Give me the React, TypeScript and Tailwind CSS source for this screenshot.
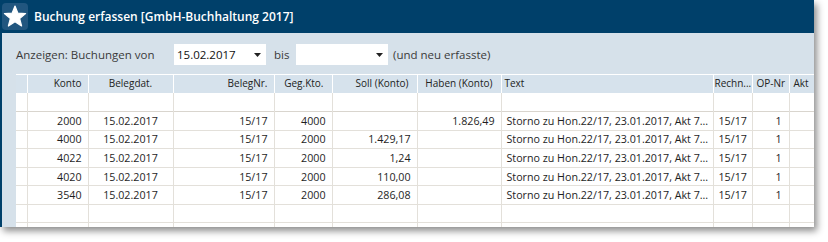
import React from "react";

type Row = { konto: string; datum: string; beleg: string; geg: string; soll: string; haben: string; text: string; rechn: string; op: string };

const rows: Row[] = [
  { konto: "2000", datum: "15.02.2017", beleg: "15/17", geg: "4000", soll: "", haben: "1.826,49", text: "Storno zu Hon.22/17, 23.01.2017, Akt 7...", rechn: "15/17", op: "1" },
  { konto: "4000", datum: "15.02.2017", beleg: "15/17", geg: "2000", soll: "1.429,17", haben: "", text: "Storno zu Hon.22/17, 23.01.2017, Akt 7...", rechn: "15/17", op: "1" },
  { konto: "4022", datum: "15.02.2017", beleg: "15/17", geg: "2000", soll: "1,24", haben: "", text: "Storno zu Hon.22/17, 23.01.2017, Akt 7...", rechn: "15/17", op: "1" },
  { konto: "4020", datum: "15.02.2017", beleg: "15/17", geg: "2000", soll: "110,00", haben: "", text: "Storno zu Hon.22/17, 23.01.2017, Akt 7...", rechn: "15/17", op: "1" },
  { konto: "3540", datum: "15.02.2017", beleg: "15/17", geg: "2000", soll: "286,08", haben: "", text: "Storno zu Hon.22/17, 23.01.2017, Akt 7...", rechn: "15/17", op: "1" },
];

const widths = [11, 61, 85, 101, 58, 85, 84, 212, 39, 37, 25];

function Star() {
  return (
    <div className="w-[26px] h-[27px] rounded-[4px] bg-[#21567f] flex items-center justify-center">
      <svg width="24" height="23" viewBox="0 0 24 23">
        <path d="M12 1 L14.9 8.2 L22.6 8.6 L16.6 13.5 L18.6 21 L12 16.8 L5.4 21 L7.4 13.5 L1.4 8.6 L9.1 8.2 Z" fill="#fff" strokeLinejoin="round" stroke="#fff" strokeWidth="1.2" />
      </svg>
    </div>
  );
}

function DateBox({ value }: { value: string }) {
  return (
    <div className="w-[92px] h-[21px] bg-white flex items-center pl-[3px] pr-[5px]">
      <span className="flex-1 text-[11.5px] text-[#111] leading-none">{value}</span>
      <svg width="7" height="4" viewBox="0 0 7 4"><path d="M0 0 L7 0 L3.5 4 Z" fill="#222" /></svg>
    </div>
  );
}

export default function App() {
  const cell = "border-r border-[#e3e0da] px-[6px] whitespace-nowrap overflow-hidden";
  return (
    <div className="w-[828px] h-[242px] bg-white" style={{ fontFamily: '"Open Sans", "Noto Sans", sans-serif' }}>
      <div className="w-[814px] shadow-[3px_4px_7px_rgba(0,0,0,0.45)]">
        <div className="h-[33px] bg-[#00406a] flex items-center pl-[2px] gap-[6px]">
          <Star />
          <span className="text-white font-semibold text-[12px]">Buchung erfassen [GmbH-Buchhaltung 2017]</span>
        </div>
        <div className="h-[194px] bg-[#d6e1ea] border-l-2 border-[#00406a] pl-[14px] overflow-hidden">
          <div className="h-[41px] flex items-center pt-[2px] text-[11.5px] text-[#3a3a3a]">
            <span className="w-[158px]">Anzeigen: Buchungen von</span>
            <DateBox value="15.02.2017" />
            <span className="w-[30px] pl-[8px]">bis</span>
            <DateBox value="" />
            <span className="pl-[5px]">(und neu erfasste)</span>
          </div>
          <table className="table-fixed border-collapse bg-white border-t border-white text-[#1e1e1e]" style={{ width: 798 }}>
            <colgroup>
              {widths.map((w, i) => (
                <col key={i} style={{ width: w }} />
              ))}
            </colgroup>
            <thead>
              <tr className="h-[18px] bg-[#d6e2ec] text-[10px] text-[#222]">
                <th className="border-r border-white"></th>
                <th className="border-r border-white font-normal text-right pr-[6px]">Konto</th>
                <th className="border-r border-white font-normal text-center">Belegdat.</th>
                <th className="border-r border-white font-normal text-right pr-[6px]">BelegNr.</th>
                <th className="border-r border-white font-normal text-right pr-[8px]">Geg.Kto.</th>
                <th className="border-r border-white font-normal text-right pr-[8px]">Soll (Konto)</th>
                <th className="border-r border-white font-normal text-right pr-[8px]">Haben (Konto)</th>
                <th className="border-r border-white font-normal text-left pl-[3px]">Text</th>
                <th className="border-r border-white font-normal text-left pl-[1px] whitespace-nowrap overflow-hidden">Rechn...</th>
                <th className="border-r border-white font-normal text-left pl-[4px] whitespace-nowrap">OP-Nr</th>
                <th className="font-normal text-left pl-[4px]">Akt</th>
              </tr>
            </thead>
            <tbody className="text-[10.7px]">
              <tr className="h-[19px] border-b border-[#d9d5ce]">
                {widths.map((_, i) => (
                  <td key={i} className="border-r border-[#e3e0da]"></td>
                ))}
              </tr>
              {rows.map((r, i) => (
                <tr key={i} className="h-[18.6px] border-b border-[#e3e0da]">
                  <td className="border-r border-[#e3e0da]"></td>
                  <td className={`${cell} text-right`}>{r.konto}</td>
                  <td className={`${cell} text-center`}>{r.datum}</td>
                  <td className={`${cell} text-right`}>{r.beleg}</td>
                  <td className={`${cell} text-right`}>{r.geg}</td>
                  <td className={`${cell} text-right`}>{r.soll}</td>
                  <td className={`${cell} text-right`}>{r.haben}</td>
                  <td className={`${cell} text-left pl-[5px]`}>{r.text}</td>
                  <td className={`${cell} text-left pl-[5px]`}>{r.rechn}</td>
                  <td className={`${cell} text-right pr-[7px]`}>{r.op}</td>
                  <td className={`${cell}`}></td>
                </tr>
              ))}
              <tr className="h-[18px] border-b border-[#e3e0da]">
                {widths.map((_, i) => (
                  <td key={i} className="border-r border-[#e3e0da]"></td>
                ))}
              </tr>
              <tr className="h-[18px]">
                {widths.map((_, i) => (
                  <td key={i} className="border-r border-[#e3e0da]"></td>
                ))}
              </tr>
            </tbody>
          </table>
        </div>
      </div>
    </div>
  );
}
